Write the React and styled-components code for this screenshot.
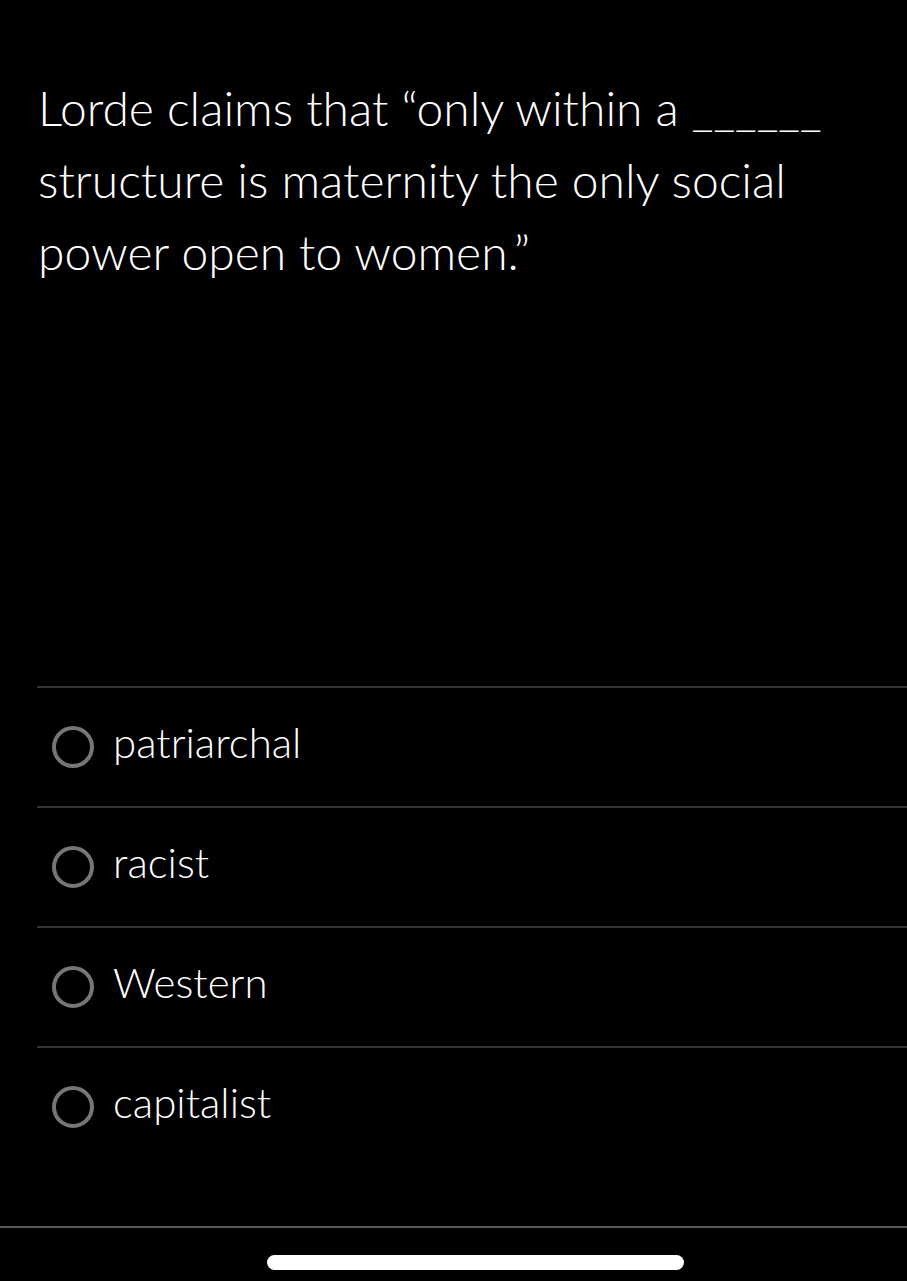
import React from "react";
import styled, { createGlobalStyle } from "styled-components";

const Global = createGlobalStyle`
  html, body {
    margin: 0;
    padding: 0;
    background: #000;
  }
  body {
    font-family: "Lato Light", Lato, "Noto Sans", sans-serif;
    color: #fff;
  }
`;

const Page = styled.div`
  display: flex;
  flex-direction: column;
  min-height: 1281px;
  background: #000;
`;

const Question = styled.p`
  margin: 0;
  padding: 72px 60px 0 38px;
  font-family: "Lato Light", Lato, "Noto Sans", sans-serif;
  font-weight: 300;
  font-size: 48px;
  line-height: 72px;
  color: #fff;
`;

const OptionList = styled.div`
  margin-top: 398px;
  margin-left: 37px;
  display: flex;
  flex-direction: column;
`;

const Option = styled.label`
  display: flex;
  align-items: center;
  gap: 19px;
  height: 118px;
  padding-left: 15px;
  border-top: 2px solid ${(p) => (p.$divider ? "#333" : "transparent")};
  cursor: pointer;
`;

const Radio = styled.span`
  box-sizing: border-box;
  width: 42px;
  height: 42px;
  border-radius: 50%;
  border: 4px solid #767676;
  flex-shrink: 0;
`;

const OptionText = styled.span`
  font-family: "Lato Light", Lato, "Noto Sans", sans-serif;
  font-weight: 300;
  font-size: 42px;
  line-height: 48px;
  margin-bottom: 10px;
  color: #fff;
`;

const Footer = styled.div`
  margin-top: 60px;
  border-top: 2px solid #5a5a5a;
  height: 53px;
  display: flex;
  flex-direction: column;
`;

const HomeBar = styled.div`
  margin-top: 27px;
  margin-left: 267px;
  width: 417px;
  height: 15px;
  border-radius: 8px;
  background: #fff;
`;

const options = ["patriarchal", "racist", "Western", "capitalist"];

export default function App() {
  return (
    <>
      <Global />
      <Page>
        <Question>
          Lorde claims that “only within a ______ structure is maternity the only social power open to women.”
        </Question>
        <OptionList>
          {options.map((o) => (
            <Option key={o} $divider>
              <Radio />
              <OptionText>{o}</OptionText>
            </Option>
          ))}
        </OptionList>
        <Footer>
          <HomeBar />
        </Footer>
      </Page>
    </>
  );
}
